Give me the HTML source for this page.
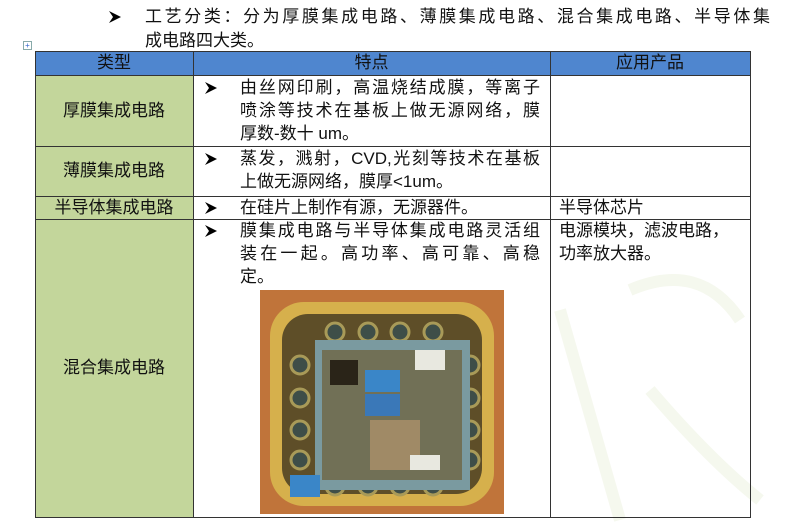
<!DOCTYPE html>
<html><head><meta charset="utf-8"><style>
body{margin:0;width:786px;height:530px;background:#fff;position:relative;overflow:hidden;font-family:"Liberation Sans","Noto Sans CJK SC",sans-serif;color:#111;}
.a{position:absolute;white-space:nowrap;font-size:17px;line-height:22px;}
.j{text-align:justify;text-align-last:justify;white-space:normal;}
.b{position:absolute;width:14px;height:14px;}
.bx{position:absolute;box-sizing:border-box;}
.hl{position:absolute;height:1px;background:#333;}
.vl{position:absolute;width:1px;background:#333;}
</style></head><body>
<svg width="0" height="0" style="position:absolute"><defs><symbol id="ar" viewBox="0 0 14 14"><path d="M1 1 L13 7 L1 13 L5 7 Z" fill="#000"/></symbol></defs></svg>
<svg class="b" style="left:108px;top:10px"><use href="#ar"/></svg>
<div class="a j" style="left:145px;top:6px;width:625px">工艺分类：分为厚膜集成电路、薄膜集成电路、混合集成电路、半导体集</div>
<div class="a" style="left:145px;top:30px">成电路四大类。</div>
<div class="bx" style="left:23px;top:41px;width:9px;height:9px;border:1px solid #8aa;font-size:8px;line-height:7px;text-align:center;color:#36c">+</div>

<div class="bx" style="left:35px;top:51px;width:716px;height:24px;background:#4f86cf"></div>
<div class="bx" style="left:35px;top:75px;width:158px;height:442px;background:#c3d69b"></div>
<svg style="position:absolute;left:500px;top:200px" width="286" height="330"><g fill="none" stroke="#f5f8ee" stroke-width="12"><path d="M60 110 L120 320"/><path d="M130 90 Q200 60 240 120"/><path d="M150 190 Q210 260 260 300"/></g></svg>

<div class="hl" style="left:35px;top:51px;width:716px"></div>
<div class="hl" style="left:35px;top:75px;width:716px"></div>
<div class="hl" style="left:35px;top:146px;width:716px"></div>
<div class="hl" style="left:35px;top:196px;width:716px"></div>
<div class="hl" style="left:35px;top:219px;width:716px"></div>
<div class="hl" style="left:35px;top:517px;width:716px"></div>
<div class="vl" style="left:35px;top:51px;height:467px"></div>
<div class="vl" style="left:193px;top:51px;height:467px"></div>
<div class="vl" style="left:550px;top:51px;height:467px"></div>
<div class="vl" style="left:750px;top:51px;height:467px"></div>

<div class="a" style="left:35px;top:52px;width:158px;text-align:center">类型</div>
<div class="a" style="left:193px;top:52px;width:357px;text-align:center">特点</div>
<div class="a" style="left:550px;top:52px;width:200px;text-align:center">应用产品</div>

<div class="a" style="left:35px;top:100px;width:158px;text-align:center">厚膜集成电路</div>
<div class="a" style="left:35px;top:160px;width:158px;text-align:center">薄膜集成电路</div>
<div class="a" style="left:35px;top:197px;width:158px;text-align:center">半导体集成电路</div>
<div class="a" style="left:35px;top:357px;width:158px;text-align:center">混合集成电路</div>

<svg class="b" style="left:204px;top:81px"><use href="#ar"/></svg>
<div class="a j" style="left:240px;top:77px;width:300px">由丝网印刷，高温烧结成膜，等离子</div>
<div class="a j" style="left:240px;top:100px;width:300px">喷涂等技术在基板上做无源网络，膜</div>
<div class="a" style="left:240px;top:123px">厚数-数十 um。</div>
<svg class="b" style="left:204px;top:152px"><use href="#ar"/></svg>
<div class="a j" style="left:240px;top:148px;width:300px">蒸发，溅射，CVD,光刻等技术在基板</div>
<div class="a" style="left:240px;top:171px">上做无源网络，膜厚&lt;1um。</div>
<svg class="b" style="left:204px;top:201px"><use href="#ar"/></svg>
<div class="a" style="left:240px;top:197px">在硅片上制作有源，无源器件。</div>
<svg class="b" style="left:204px;top:224px"><use href="#ar"/></svg>
<div class="a j" style="left:240px;top:220px;width:300px">膜集成电路与半导体集成电路灵活组</div>
<div class="a j" style="left:240px;top:243px;width:300px">装在一起。高功率、高可靠、高稳</div>
<div class="a" style="left:240px;top:266px">定。</div>

<div class="a" style="left:559px;top:197px">半导体芯片</div>
<div class="a" style="left:559px;top:220px">电源模块，滤波电路，</div>
<div class="a" style="left:559px;top:243px">功率放大器。</div>

<svg style="position:absolute;left:260px;top:290px" width="244" height="224">
<rect width="244" height="224" fill="#c0743a"/>
<rect x="10" y="12" width="224" height="204" rx="34" fill="#d6b04c"/>
<rect x="22" y="24" width="200" height="180" rx="26" fill="#5e4e28"/>
<g fill="#3e4e48" stroke="#a89a58" stroke-width="3">
<circle cx="75" cy="42" r="9"/><circle cx="108" cy="42" r="9"/><circle cx="140" cy="42" r="9"/><circle cx="173" cy="42" r="9"/>
<circle cx="75" cy="196" r="9"/><circle cx="108" cy="196" r="9"/><circle cx="140" cy="196" r="9"/><circle cx="173" cy="196" r="9"/>
<circle cx="40" cy="75" r="9"/><circle cx="40" cy="108" r="9"/><circle cx="40" cy="140" r="9"/><circle cx="40" cy="170" r="9"/>
<circle cx="210" cy="75" r="9"/><circle cx="210" cy="108" r="9"/><circle cx="210" cy="140" r="9"/><circle cx="210" cy="170" r="9"/>
</g>
<rect x="55" y="50" width="155" height="150" fill="#7a9aa0"/>
<rect x="62" y="60" width="140" height="130" fill="#6e5e36" opacity=".7"/>
<rect x="105" y="80" width="35" height="22" fill="#3a86c8"/>
<rect x="105" y="104" width="35" height="22" fill="#3a78b8"/>
<rect x="110" y="130" width="50" height="50" fill="#a08a66"/>
<rect x="70" y="70" width="28" height="25" fill="#2a2418"/>
<rect x="155" y="60" width="30" height="20" fill="#e8e8e0"/>
<rect x="150" y="165" width="30" height="15" fill="#e8e8e0"/>
<rect x="30" y="185" width="30" height="22" fill="#3a86c8"/>
</svg>
</body></html>
